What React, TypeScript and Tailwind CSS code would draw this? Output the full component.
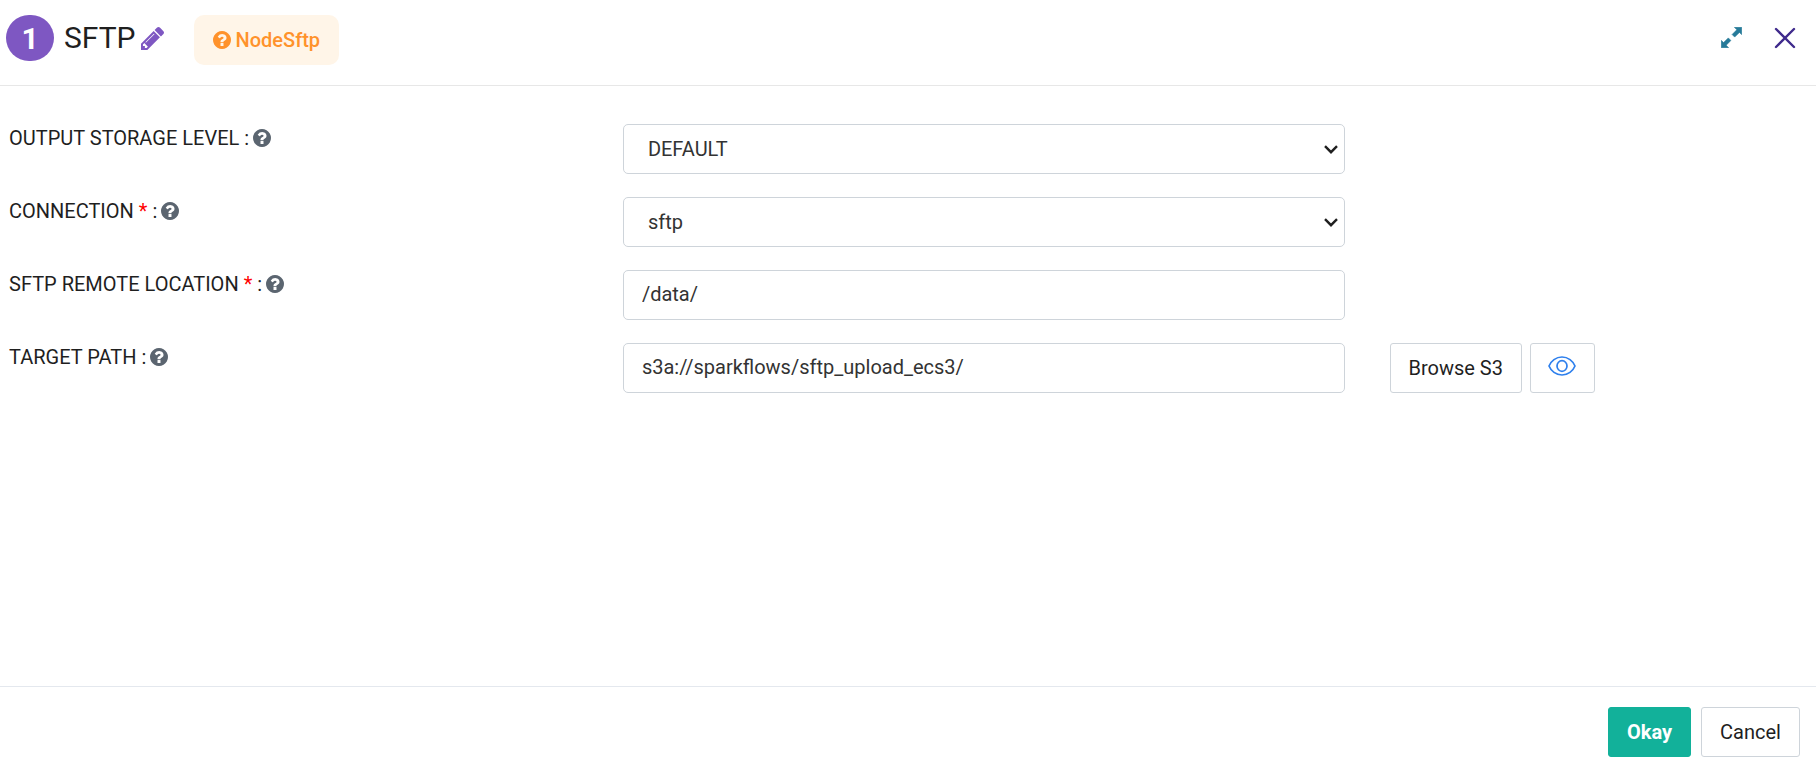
import { useId } from "react";
import type { ReactNode } from "react";

function PencilIcon() {
  return (
    <svg viewBox="128 149 1515 1515" className="size-[23px]" fill="currentColor" aria-hidden="true">
      <path d="M491 1536l91-91-235-235-91 91v107h128v128h107zm523-928q0-22-22-22-10 0-17 7l-542 542q-7 7-7 17 0 22 22 22 10 0 17-7l542-542q7-7 7-17zm-54-192l416 416-832 832h-416v-416l832-832zm683 96q0 53-37 90l-166 166-416-416 166-165q36-38 90-38 53 0 91 38l235 234q37 39 37 91z" />
    </svg>
  );
}

function QuestionIcon() {
  return (
    <svg viewBox="128 128 1536 1536" className="size-[18px] shrink-0" fill="currentColor" aria-hidden="true">
      <path d="M1024 1376v-192q0-14-9-23t-23-9h-192q-14 0-23 9t-9 23v192q0 14 9 23t23 9h192q14 0 23-9t9-23zm256-672q0-88-55.5-163t-138.5-116-170-41q-243 0-371 213-15 24 8 42l132 100q7 6 19 6 16 0 25-12 53-68 86-92 34-24 86-24 48 0 85.5 26t37.5 59q0 38-20 61t-68 45q-63 28-115.5 86.5t-52.5 125.5v36q0 14 9 23t23 9h192q14 0 23-9t9-23q0-19 21.5-49.5t54.5-49.5q32-18 49-28.5t46-35 44.5-48 28-60.5 12.5-81zm384 192q0 209-103 385.5t-279.5 279.5-385.5 103-385.5-103-279.5-279.5-103-385.5 103-385.5 279.5-279.5 385.5-103 385.5 103 279.5 279.5 103 385.5z" />
    </svg>
  );
}

function ExpandIcon() {
  return (
    <svg viewBox="0 0 21 21" className="size-[21px]" fill="currentColor" stroke="currentColor" strokeWidth="0.6" strokeLinejoin="round" aria-hidden="true">
      <path d="M13.4.3h7.300V7.600l-2.300-2.200-4.700 4.700-2.600-2.600 4.700-4.700z" />
      <path d="M7.600 20.700H.3V13.400l2.300 2.200 4.700-4.700 2.600 2.600-4.700 4.700z" />
    </svg>
  );
}

function CloseIcon() {
  return (
    <svg viewBox="0 0 22 22" className="size-[22px]" fill="none" stroke="currentColor" strokeWidth="2.4" strokeLinecap="round" aria-hidden="true">
      <path d="M2 2l18 18M20 2L2 20" />
    </svg>
  );
}

function EyeIcon() {
  return (
    <svg viewBox="0 0 28 20" className="h-5 w-7" fill="none" stroke="currentColor" strokeWidth="1.7" aria-hidden="true">
      <path d="M1 10C3 5 8 1 14 1s11 4 13 9c-2 5-7 9-13 9S3 15 1 10z" />
      <ellipse cx="14" cy="10" rx="5" ry="5.3" />
    </svg>
  );
}

function ChevronIcon() {
  return (
    <svg viewBox="0 0 14 9" className="pointer-events-none absolute top-[21px] right-[7px] h-[9px] w-3.5" fill="none" stroke="currentColor" strokeWidth="2.4" aria-hidden="true">
      <path d="M1 1.200l6 6 6-6" />
    </svg>
  );
}

type FieldProps = {
  label: string;
  required?: boolean;
  control: (id: string) => ReactNode;
  actions?: ReactNode;
};

function Field({ label, required, control, actions }: FieldProps) {
  const id = useId();
  return (
    <div className="grid grid-cols-[34.3%_39.75%_1fr] items-start">
      <div className="flex items-center gap-1 pt-px pl-[9px]">
        <label htmlFor={id} className="text-[20px] leading-[26px]">
          {label} {required && <span className="text-[#ff0000]">* </span>}:
        </label>
        <span className="text-[#5b6570]">
          <QuestionIcon />
        </span>
      </div>
      {control(id)}
      {actions}
    </div>
  );
}

const box = "h-[50px] w-full rounded-[5px] border border-[#ced4da] bg-white text-[20px] text-[#333333]";
const textBox = "px-[18px] pb-0.5";
const button = "h-[50px] rounded-[3px] border text-[20px]";

function SelectField({ label, required, value }: { label: string; required?: boolean; value: string }) {
  return (
    <Field
      label={label}
      required={required}
      control={(id) => (
        <div className="relative">
          <select id={id} defaultValue={value} className={`${box} appearance-none pr-8 pl-6`}>
            <option>{value}</option>
          </select>
          <ChevronIcon />
        </div>
      )}
    />
  );
}

export default function App() {
  return (
    <div className="flex min-h-screen flex-col bg-white font-['Roboto',sans-serif] text-[#1f1f1f]">
      <header className="flex items-start justify-between border-b border-[#e7e7e7] pt-[15px] pr-5 pb-5 pl-1.5">
        <div className="flex items-start">
          <span className="flex h-[46px] w-12 items-center justify-center rounded-full bg-[#7e57c2] text-[30px] font-bold text-white">1</span>
          <h1 className="ml-2.5 text-[30px] leading-[45px]">SFTP</h1>
          <button type="button" aria-label="Edit name" className="mt-3 ml-[5px] text-[#7e57c2]">
            <PencilIcon />
          </button>
          <span className="ml-[30px] flex h-[50px] items-center gap-[5px] rounded-[10px] bg-[#fff5e8] px-[19px] text-[20px] font-medium text-[#ff922b]">
            <QuestionIcon />
            NodeSftp
          </span>
        </div>
        <div className="mt-3 flex items-start gap-8">
          <button type="button" aria-label="Expand" className="text-[#267a99]">
            <ExpandIcon />
          </button>
          <button type="button" aria-label="Close" className="text-[#3f2a8c]">
            <CloseIcon />
          </button>
        </div>
      </header>

      <main className="flex flex-1 flex-col gap-[23px] pt-[38px]">
        <SelectField label="OUTPUT STORAGE LEVEL" value="DEFAULT" />
        <SelectField label="CONNECTION" required value="sftp" />
        <Field
          label="SFTP REMOTE LOCATION"
          required
          control={(id) => <input id={id} type="text" defaultValue="/data/" className={`${box} ${textBox}`} />}
        />
        <Field
          label="TARGET PATH"
          control={(id) => (
            <input id={id} type="text" defaultValue="s3a://sparkflows/sftp_upload_ecs3/" className={`${box} ${textBox}`} />
          )}
          actions={
            <div className="flex gap-2 pl-[45px]">
              <button type="button" className={`${button} w-[132px] border-[#ced4da] bg-white`}>
                Browse S3
              </button>
              <button type="button" aria-label="Preview" className={`${button} flex w-[65px] items-center justify-center border-[#ced4da] bg-white pb-1 text-[#2f80ed]`}>
                <EyeIcon />
              </button>
            </div>
          }
        />
      </main>

      <footer className="flex justify-end gap-2.5 border-t border-[#e4e8ee] pt-5 pr-4 pb-3">
        <button type="button" className={`${button} w-[83px] border-[#12b19a] bg-[#12b19a] font-bold text-white`}>
          Okay
        </button>
        <button type="button" className={`${button} w-[99px] border-[#ced4da] bg-white`}>
          Cancel
        </button>
      </footer>
    </div>
  );
}
